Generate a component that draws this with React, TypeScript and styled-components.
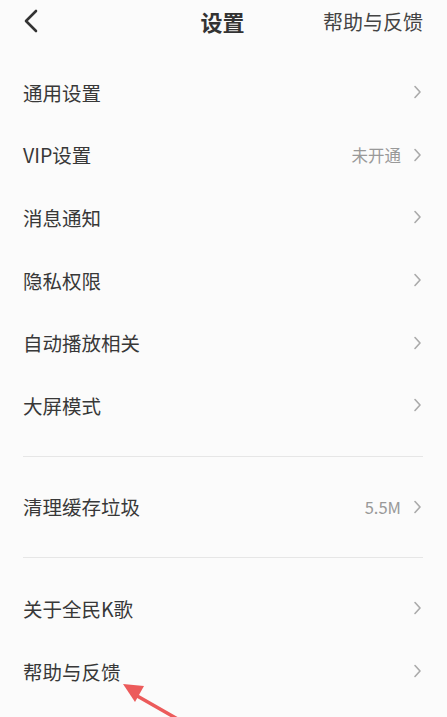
import React from 'react'
import styled, { createGlobalStyle } from 'styled-components'

const GlobalStyle = createGlobalStyle`
  html, body {
    margin: 0;
    padding: 0;
    background: #fbfbfb;
  }
  body {
    font-family: "Noto Sans CJK SC", "Noto Sans", sans-serif;
    color: #383838;
  }
`

const Page = styled.div`
  position: relative;
  width: 447px;
  height: 717px;
  overflow: hidden;
  background: #fbfbfb;
`

const Header = styled.header`
  height: 42px;
  display: grid;
  grid-template-columns: 1fr auto 1fr;
  align-items: center;
  padding: 0 24px 0 22px;
`

const BackButton = styled.div`
  display: flex;
  align-items: center;
  color: #333;
`

const Title = styled.h1`
  margin: 0;
  font-size: 22px;
  font-weight: 700;
  color: #333;
`

const HeaderAction = styled.span`
  justify-self: end;
  font-size: 20px;
  color: #444;
`

const Group = styled.section`
  padding: 19px 0;
`

const Divider = styled.hr`
  margin: 0 24px 0 23px;
  border: 0;
  height: 1px;
  background: #e6e6e6;
`

const Row = styled.div`
  height: 62.6px;
  display: flex;
  align-items: center;
  justify-content: space-between;
  padding: 0 25px 0 23px;
`

const Label = styled.span`
  font-size: 19.5px;
  color: #383838;
`

const Trail = styled.span`
  display: flex;
  align-items: center;
  gap: 12px;
`

const Value = styled.span`
  font-size: 16.5px;
  color: #999;
`

const Chevron = () => (
  <svg width="9" height="14" viewBox="0 0 9 14">
    <path d="M2 1.5 L7 7 L2 12.5" fill="none" stroke="#aaa" strokeWidth="1.6" strokeLinecap="round" strokeLinejoin="round" />
  </svg>
)

const Annotation = styled.svg`
  position: absolute;
  left: 108px;
  top: 668px;
`

type Item = { label: string; value?: string }

const groups: Item[][] = [
  [
    { label: '通用设置' },
    { label: 'VIP设置', value: '未开通' },
    { label: '消息通知' },
    { label: '隐私权限' },
    { label: '自动播放相关' },
    { label: '大屏模式' },
  ],
  [{ label: '清理缓存垃圾', value: '5.5M' }],
  [{ label: '关于全民K歌' }, { label: '帮助与反馈' }],
]

export default function App() {
  return (
    <Page>
      <GlobalStyle />
      <Header>
        <BackButton>
          <svg width="18" height="24" viewBox="0 0 18 24">
            <path d="M14 2 L4 12 L14 22" fill="none" stroke="#333" strokeWidth="2.6" strokeLinecap="round" strokeLinejoin="round" />
          </svg>
        </BackButton>
        <Title>设置</Title>
        <HeaderAction>帮助与反馈</HeaderAction>
      </Header>

      {groups.map((items, gi) => (
        <React.Fragment key={gi}>
          {gi > 0 && <Divider />}
          <Group>
            {items.map((item) => (
              <Row key={item.label}>
                <Label>{item.label}</Label>
                <Trail>
                  {item.value && <Value>{item.value}</Value>}
                  <Chevron />
                </Trail>
              </Row>
            ))}
          </Group>
        </React.Fragment>
      ))}

      <Annotation width="100" height="52" viewBox="0 0 100 52">
        <line x1="24" y1="25" x2="80" y2="57" stroke="#ec5b5b" strokeWidth="3.5" strokeLinecap="round" />
        <polygon points="15,16 36,18 27,34" fill="#ec5b5b" />
      </Annotation>
    </Page>
  )
}
